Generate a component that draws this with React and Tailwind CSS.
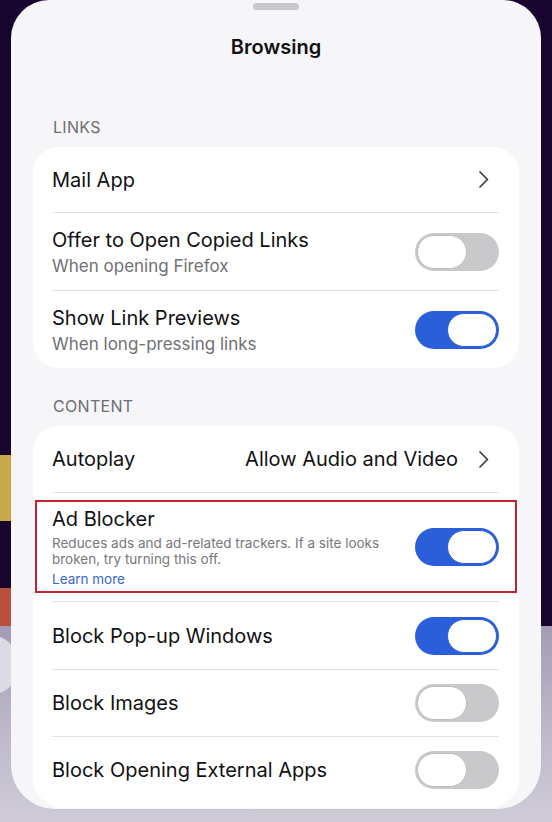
import React from 'react';

const font = { fontFamily: 'Inter, "Noto Sans", sans-serif' };

const Toggle = ({ on }) => (
  <div
    className={`w-[84px] h-[38px] rounded-full p-[2px] flex shrink-0 ${
      on ? 'bg-[#2b5fd9] justify-end' : 'bg-[#c9c9cc] justify-start'
    }`}
  >
    <div
      className={`w-[50px] h-[34px] rounded-full bg-white border ${
        on ? 'border-[#2b5fd9]' : 'border-[#bdbdc0]'
      }`}
    />
  </div>
);

const Chevron = () => (
  <svg width="12" height="19" viewBox="0 0 12 19" fill="none" className="shrink-0 mr-[9px]">
    <path d="M2 2l7.5 7.5L2 17" stroke="#3c3c43" strokeWidth="1.7" strokeLinecap="round" strokeLinejoin="round" />
  </svg>
);

const Row = ({ first, height, children }) => (
  <div className="pl-[19px] pr-[20px]">
    <div
      className={`flex items-center justify-between ${first ? '' : 'border-t border-[#e2e2e6]'}`}
      style={{ height }}
    >
      {children}
    </div>
  </div>
);

const Title = ({ children }) => (
  <div className="text-[20px] leading-[26px] text-[#111113]">{children}</div>
);

const Sub = ({ children }) => (
  <div className="text-[17px] leading-[22px] text-[#707075] mt-[2px]">{children}</div>
);

const Header = ({ children, className }) => (
  <div className={`pl-[42px] text-[16px] leading-[20px] text-[#6d6d72] tracking-[0.3px] ${className}`}>
    {children}
  </div>
);

export default function App() {
  return (
    <div className="relative w-[552px] h-[822px] overflow-hidden bg-[#170530]" style={font}>
      {/* backdrop behind the sheet */}
      <div className="absolute left-0 top-[455px] w-[14px] h-[66px] bg-[#c8a94c]" />
      <div className="absolute left-0 top-[588px] w-[20px] h-[40px] bg-[#b9503c]" />
      <div className="absolute left-0 right-0 top-[626px] bottom-0 bg-gradient-to-b from-[#a49cb4] via-[#bdb7c9] to-[#cfcbd7]" />
      <div className="absolute left-[-30px] top-[636px] w-[46px] h-[58px] rounded-full bg-[#dcdae2]" />

      <div className="relative mx-[11px] h-[809px] rounded-t-[38px] rounded-b-[44px] bg-[#f6f6f9] overflow-hidden pt-[3px]">
        <div className="mx-auto w-[46px] h-[7px] rounded-full bg-[#c7c7cc]" />
        <div className="mt-[23px] text-center text-[20px] leading-[28px] font-semibold text-[#111113]">
          Browsing
        </div>

        <Header className="mt-[56px]">LINKS</Header>
        <div className="mt-[10px] mx-[22px] rounded-[26px] bg-white">
          <Row first height={65}>
            <Title>Mail App</Title>
            <Chevron />
          </Row>
          <Row height={78}>
            <div>
              <Title>Offer to Open Copied Links</Title>
              <Sub>When opening Firefox</Sub>
            </div>
            <Toggle />
          </Row>
          <Row height={78}>
            <div>
              <Title>Show Link Previews</Title>
              <Sub>When long-pressing links</Sub>
            </div>
            <Toggle on />
          </Row>
        </div>

        <Header className="mt-[28px]">CONTENT</Header>
        <div className="mt-[10px] mx-[22px] rounded-t-[26px] rounded-b-[30px] bg-white pb-[6px]">
          <Row first height={66}>
            <Title>Autoplay</Title>
            <div className="flex items-center gap-[20px]">
              <span className="text-[20px] text-[#111113]">Allow Audio and Video</span>
              <Chevron />
            </div>
          </Row>
          <div className="ml-[19px] mr-[20px] border-t border-[#e2e2e6]" />
          <div className="px-[2px] pt-[7px] pb-[8px]">
            <div className="border-2 border-[#c8232c] h-[93px] pl-[15px] pr-[16px] flex items-center justify-between">
              <div className="w-[330px]">
                <Title>Ad Blocker</Title>
                <div className="text-[13.5px] leading-[16px] text-[#77777c] mt-[3px]">
                  Reduces ads and ad-related trackers. If a site looks broken, try turning this off.
                </div>
                <div className="text-[13.5px] leading-[16px] text-[#3766cc] mt-[4px]">Learn more</div>
              </div>
              <Toggle on />
            </div>
          </div>
          <Row height={68}>
            <Title>Block Pop-up Windows</Title>
            <Toggle on />
          </Row>
          <Row height={67}>
            <Title>Block Images</Title>
            <Toggle />
          </Row>
          <Row height={66}>
            <Title>Block Opening External Apps</Title>
            <Toggle />
          </Row>
        </div>
      </div>
    </div>
  );
}
